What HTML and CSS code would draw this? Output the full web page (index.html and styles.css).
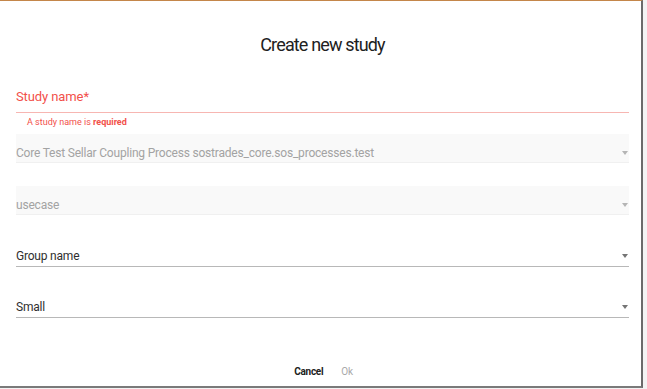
FILE: index.html
```html
<!DOCTYPE html>
<html lang="en">
<head>
    <meta charset="UTF-8">
    <title>Create new study</title>
    <link rel="stylesheet" href="styles.css">
</head>
<body>
    <div class="dialog">
        <h1 class="dialog-title">Create new study</h1>

        <div class="dialog-content">
            <!-- Nome do estudo (obrigatório) -->
            <div class="field field-invalid">
                <div class="field-input">
                    <span class="field-label">Study name*</span>
                </div>
                <div class="field-error">A study name is <strong>required</strong></div>
            </div>

            <!-- Processo (desativado) -->
            <div class="field field-disabled">
                <div class="field-input">
                    <span class="field-value">Core Test Sellar Coupling Process sostrades_core.sos_processes.test</span>
                    <span class="arrow"></span>
                </div>
            </div>

            <div class="field field-disabled">
                <div class="field-input">
                    <span class="field-value">usecase</span>
                    <span class="arrow"></span>
                </div>
            </div>

            <div class="field field-select">
                <div class="field-input">
                    <span class="field-value">Group name</span>
                    <span class="arrow"></span>
                </div>
            </div>

            <div class="field field-select">
                <div class="field-input">
                    <span class="field-value">Small</span>
                    <span class="arrow"></span>
                </div>
            </div>
        </div>

        <div class="dialog-actions">
            <button class="btn btn-cancel">Cancel</button>
            <button class="btn btn-ok" disabled>Ok</button>
        </div>
    </div>
</body>
</html>
```

FILE: styles.css
```css
body {
    margin: 0;
    background-color: #f3f3f3;
    font-family: Roboto, Arial, sans-serif;
}
.dialog {
    width: 641px;
    height: 385px;
    background-color: #fff;
    border-top: 1px solid #c4864a;
    border-right: 2px solid #6a6a6a;
    border-bottom: 2px solid #7a7a7a;
    display: flex;
    flex-direction: column;
}
.dialog-title {
    margin: 32px 0 0;
    padding-left: 4px;
    font-size: 18px;
    font-weight: 400;
    line-height: 24px;
    letter-spacing: -0.85px;
    color: #212121;
    text-align: center;
}
.dialog-content {
    padding: 25px 12px 0 16px;
}
.field-input {
    display: flex;
    align-items: center;
    justify-content: space-between;
    font-size: 12px;
    letter-spacing: -0.2px;
}
.field-invalid .field-input {
    height: 21px;
    padding: 4px 0 5px;
    border-bottom: 1px solid #f7b6b2;
}
.field-label {
    color: #f2504a;
    font-size: 13px;
    letter-spacing: -0.1px;
}
.field-error {
    height: 21px;
    padding: 4px 0 0 11px;
    box-sizing: border-box;
    font-size: 9px;
    color: #f2504a;
}
.field-disabled {
    margin-bottom: 23px;
}
.field-disabled .field-input {
    height: 29px;
    padding-top: 9px;
    box-sizing: border-box;
    background-color: #f9f9f9;
    border-bottom: 1px solid #f0f0f0;
    color: #a3a3a3;
}
.field-select {
    margin-bottom: 22px;
}
.field-select .field-input {
    height: 29px;
    padding-top: 8px;
    box-sizing: border-box;
    border-bottom: 1px solid #b8b8b8;
    color: #2f2f2f;
}
.arrow {
    width: 0;
    height: 0;
    margin-right: 1px;
    border-left: 3px solid transparent;
    border-right: 3px solid transparent;
    border-top: 4px solid #757575;
}
.field-disabled .arrow {
    border-top-color: #b5b5b5;
}
.dialog-actions {
    margin-top: auto;
    height: 30px;
    display: flex;
    justify-content: center;
    align-items: center;
    gap: 10px;
    padding-left: 6px;
}
.btn {
    background: none;
    border: none;
    font-family: Roboto, Arial, sans-serif;
    font-size: 10px;
    letter-spacing: -0.3px;
    padding: 0 4px;
}
.btn-cancel {
    font-weight: 700;
    color: #212121;
}
.btn-ok {
    color: #a8a8a8;
}
```
